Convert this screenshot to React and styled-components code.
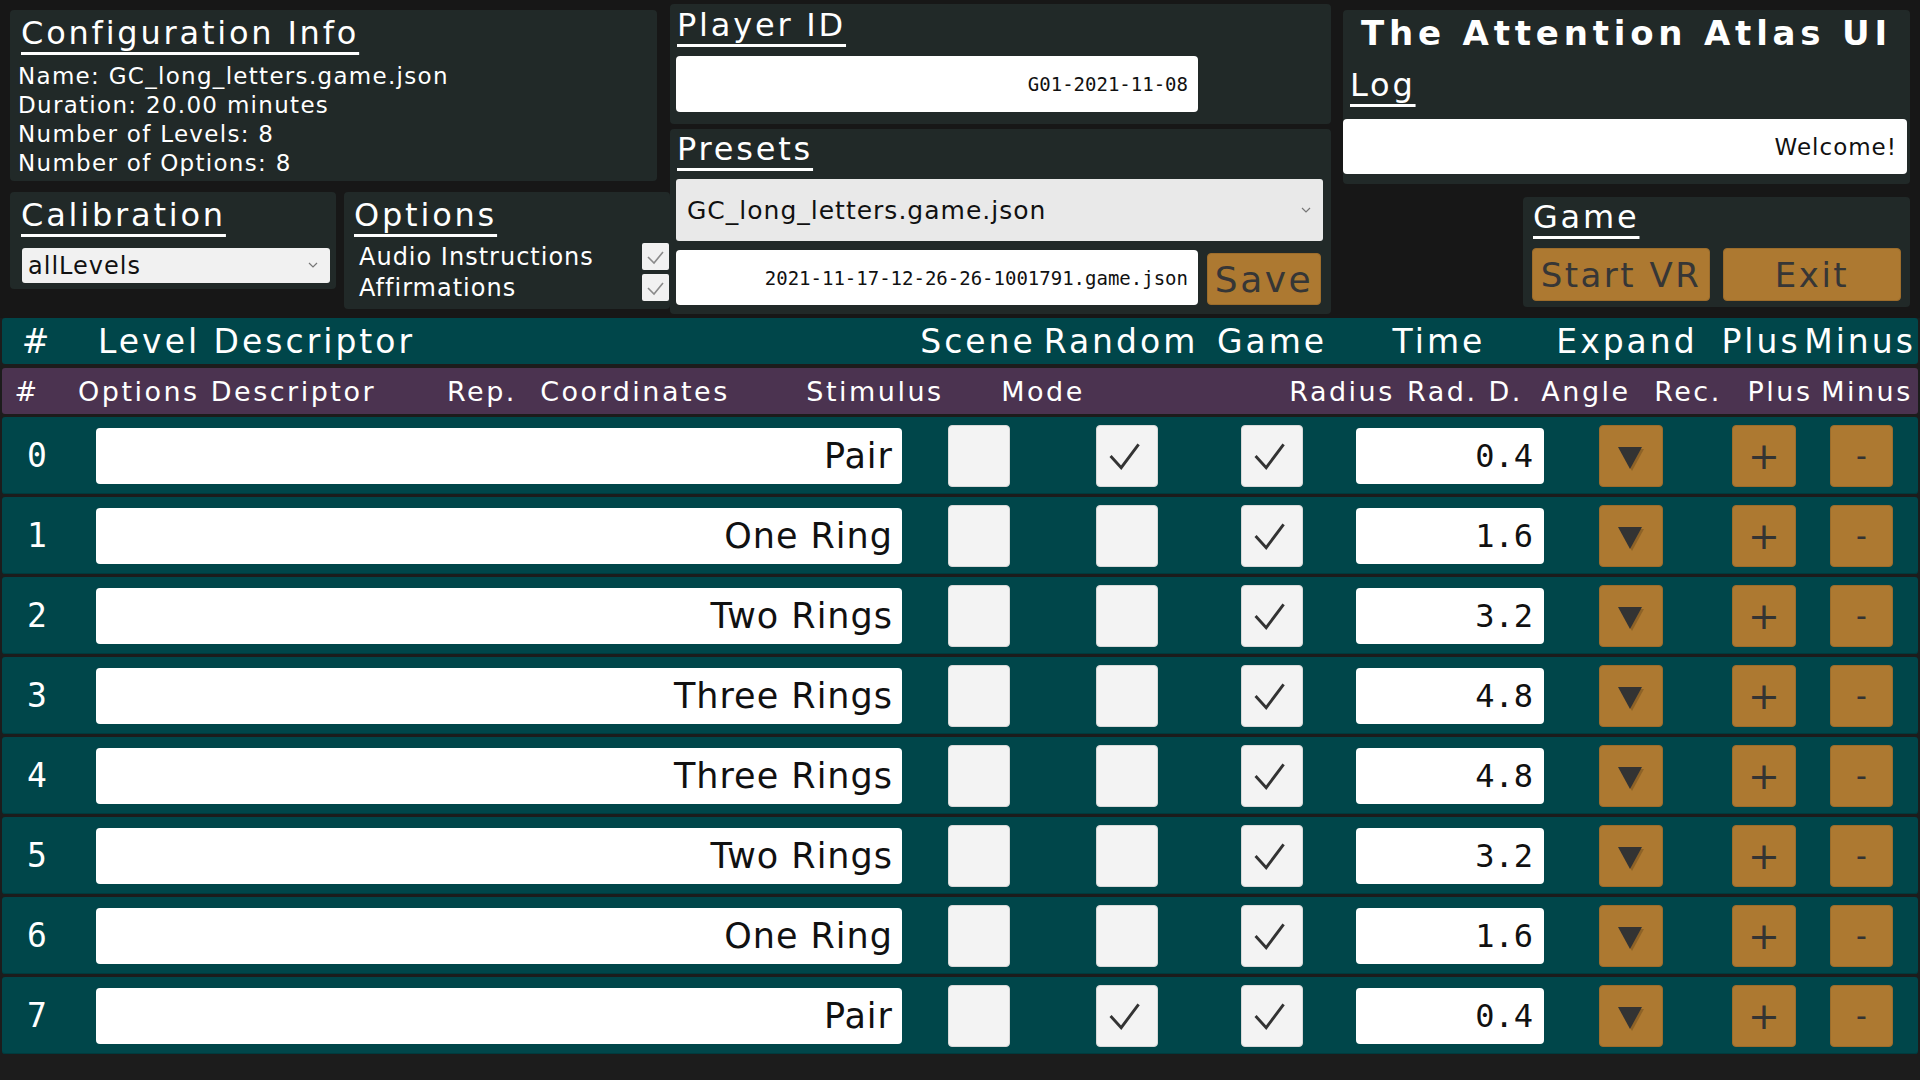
import React from "react";
import styled, { createGlobalStyle } from "styled-components";

const GlobalStyle = createGlobalStyle`
  html, body {
    margin: 0;
    padding: 0;
    background: #171717;
  }
  body {
    font-family: "DejaVu Sans", "Liberation Sans", sans-serif;
    color: #ffffff;
  }
`;

const Page = styled.div`
  width: 1920px;
  height: 1080px;
  overflow: hidden;
  background: #171717;
  display: flex;
  flex-direction: column;
`;

// top area
const Top = styled.div`
  display: flex;
  align-items: flex-start;
  height: 318px;
  flex-shrink: 0;
`;

const Column = styled.div`
  display: flex;
  flex-direction: column;
  width: ${(p) => p.$w}px;
  margin-left: ${(p) => p.$ml || 0}px;
  padding-top: ${(p) => p.$pt || 0}px;
`;

const Panel = styled.div`
  box-sizing: border-box;
  display: flex;
  flex-direction: column;
  background: #212928;
  border-radius: 4px;
  width: ${(p) => p.$w}px;
  height: ${(p) => p.$h}px;
  margin-top: ${(p) => p.$mt || 0}px;
  padding-top: ${(p) => p.$pt || 0}px;
  padding-left: ${(p) => p.$pl || 0}px;
  align-self: ${(p) => (p.$end ? "flex-end" : "flex-start")};
`;

const PanelRow = styled.div`
  display: flex;
  align-items: flex-start;
  gap: 8px;
  margin-top: 11px;
`;

const SectionTitle = styled.div`
  align-self: flex-start;
  font-size: 32px;
  line-height: 40px;
  letter-spacing: 2.8px;
  margin-left: ${(p) => p.$ml || 0}px;
  margin-top: ${(p) => p.$mt || 0}px;
  text-decoration: underline;
  text-decoration-thickness: 3px;
  text-underline-offset: 8px;
  text-decoration-skip-ink: none;
`;

const InfoText = styled.div`
  margin-top: 9px;
  font-size: 23px;
  line-height: 29px;
  letter-spacing: 1.3px;
`;

const SelectBox = styled.div`
  box-sizing: border-box;
  display: flex;
  align-items: center;
  justify-content: space-between;
  width: ${(p) => p.$w}px;
  height: ${(p) => p.$h}px;
  margin-top: ${(p) => p.$mt}px;
  padding: 0 12px 0 ${(p) => p.$pl}px;
  background: ${(p) => p.$bg};
  border-radius: 3px;
  color: #111;
  font-size: ${(p) => p.$fs}px;
  letter-spacing: 1px;
  white-space: nowrap;
`;

const Chevron = styled.svg`
  width: 10px;
  height: 7px;
  flex-shrink: 0;
`;

const OptionList = styled.div`
  display: flex;
  flex-direction: column;
  gap: 4px;
  margin-top: 8px;
  padding-right: 1px;
`;

const OptionRow = styled.div`
  display: flex;
  align-items: center;
  justify-content: space-between;
  height: 27px;
  padding-left: 5px;
  font-size: 24px;
  letter-spacing: 1px;
`;

const SmallCheck = styled.div`
  box-sizing: border-box;
  width: 27px;
  height: 27px;
  background: #f1f1f1;
  border-radius: 2px;
  display: flex;
  align-items: center;
  justify-content: center;
`;

const TextField = styled.div`
  box-sizing: border-box;
  display: flex;
  align-items: center;
  justify-content: flex-end;
  width: ${(p) => p.$w}px;
  height: ${(p) => p.$h}px;
  margin-top: ${(p) => p.$mt || 0}px;
  padding-right: ${(p) => p.$pr || 10}px;
  background: #ffffff;
  border-radius: 4px;
  color: #111;
  font-family: ${(p) => (p.$mono ? '"DejaVu Sans Mono", monospace' : '"DejaVu Sans", sans-serif')};
  font-size: ${(p) => p.$fs}px;
  letter-spacing: ${(p) => p.$ls || 0}px;
  white-space: nowrap;
`;

const FileRow = styled.div`
  display: flex;
  align-items: flex-end;
  margin-top: 9px;
`;

const OrangeButton = styled.div`
  box-sizing: border-box;
  display: flex;
  align-items: center;
  justify-content: center;
  width: ${(p) => p.$w}px;
  height: ${(p) => p.$h}px;
  margin-left: ${(p) => p.$ml || 0}px;
  background: #ad7931;
  border: 1px solid #9c6c2b;
  border-radius: 4px;
  color: #363636;
  font-size: ${(p) => p.$fs || 34}px;
  letter-spacing: ${(p) => p.$ls ?? 2.5}px;
  white-space: nowrap;
`;

const AppTitle = styled.div`
  font-size: 34px;
  font-weight: bold;
  line-height: 46px;
  letter-spacing: 4.8px;
  text-align: center;
`;

const ButtonRow = styled.div`
  display: flex;
  margin-top: 11px;
  margin-left: -1px;
`;

// table
const Table = styled.div`
  display: flex;
  flex-direction: column;
  gap: 3px;
  padding: 0 2px;
  background: #1c1c1c;
  flex: 1;
`;

const HeaderRow = styled.div`
  display: flex;
  align-items: center;
  height: 46px;
  margin-bottom: ${(p) => p.$mb || 0}px;
  background: ${(p) => p.$bg};
  border-radius: 3px;
  font-size: ${(p) => p.$fs}px;
  letter-spacing: ${(p) => p.$ls}px;
  white-space: nowrap;
`;

const HeadCell = styled.div`
  display: flex;
  justify-content: ${(p) => (p.$left ? "flex-start" : "center")};
  width: ${(p) => p.$w}px;
  margin-left: ${(p) => p.$ml}px;
  flex-shrink: 0;
`;

const Row = styled.div`
  display: flex;
  align-items: center;
  height: 77px;
  background: #00464a;
  border-radius: 3px;
  box-shadow: inset 0 -1px 0 #003a3d;
`;

const NumCell = styled.div`
  width: 70px;
  text-align: center;
  font-family: "DejaVu Sans Mono", monospace;
  font-size: 33px;
  flex-shrink: 0;
`;

const BigCheck = styled.div`
  box-sizing: border-box;
  width: 62px;
  height: 62px;
  margin-left: ${(p) => p.$ml}px;
  background: #f3f3f3;
  border: 1px solid #d8d8d8;
  border-radius: 4px;
  display: flex;
  align-items: center;
  justify-content: center;
  flex-shrink: 0;
`;

const RowField = styled(TextField)`
  margin-left: ${(p) => p.$ml}px;
  flex-shrink: 0;
`;

const RowButton = styled(OrangeButton)`
  flex-shrink: 0;
  color: #333;
`;

const Arrow = styled.svg`
  width: 26px;
  height: 24px;
  margin-top: 6px;
`;

const head1 = [
  ["#", 20, 30],
  ["Level Descriptor", 46, 330, true],
  ["Scene", 495, 110],
  ["Random", 13, 150],
  ["Game", 21, 110],
  ["Time", 62, 100],
  ["Expand", 68, 140],
  ["Plus", 26, 76],
  ["Minus", 11, 100],
];

const head2 = [
  ["#", 10, 30],
  ["Options Descriptor", 36, 300, true],
  ["Rep.", 64, 80],
  ["Coordinates", 13, 200],
  ["Stimulus", 65, 150],
  ["Mode", 48, 90],
  ["Radius", 199, 110],
  ["Rad. D.", 8, 120],
  ["Angle", 11, 100],
  ["Rec.", 17, 70],
  ["Plus", 22, 70],
  ["Minus", 2, 100],
];

const levels = [
  { name: "Pair", scene: false, random: true, game: true, time: "0.4" },
  { name: "One Ring", scene: false, random: false, game: true, time: "1.6" },
  { name: "Two Rings", scene: false, random: false, game: true, time: "3.2" },
  { name: "Three Rings", scene: false, random: false, game: true, time: "4.8" },
  { name: "Three Rings", scene: false, random: false, game: true, time: "4.8" },
  { name: "Two Rings", scene: false, random: false, game: true, time: "3.2" },
  { name: "One Ring", scene: false, random: false, game: true, time: "1.6" },
  { name: "Pair", scene: false, random: true, game: true, time: "0.4" },
];

function Tick({ size = 62 }) {
  if (size < 40) {
    return (
      <svg width="27" height="27" viewBox="0 0 27 27">
        <polyline points="6,14 12,20 21,9" fill="none" stroke="#8a8a8a" strokeWidth="1.6" />
      </svg>
    );
  }
  return (
    <svg width="62" height="62" viewBox="0 0 62 62">
      <polyline points="14,31 25,43 43,19" fill="none" stroke="#333" strokeWidth="3" strokeLinejoin="miter" />
    </svg>
  );
}

function Caret() {
  return (
    <Chevron viewBox="0 0 10 7">
      <polyline points="1,1 5,5 9,1" fill="none" stroke="#777" strokeWidth="1.2" />
    </Chevron>
  );
}

function LevelRow({ index, level }) {
  return (
    <Row>
      <NumCell>{index}</NumCell>
      <RowField $ml={24} $w={806} $h={56} $fs={35} $ls={1} $pr={9}>
        {level.name}
      </RowField>
      <BigCheck $ml={46}>{level.scene && <Tick />}</BigCheck>
      <BigCheck $ml={86}>{level.random && <Tick />}</BigCheck>
      <BigCheck $ml={83}>{level.game && <Tick />}</BigCheck>
      <RowField $ml={53} $w={188} $h={56} $fs={32} $pr={11} $mono>
        {level.time}
      </RowField>
      <RowButton $ml={55} $w={64} $h={62}>
        <Arrow viewBox="0 0 26 24">
          <polygon points="2,2 26,2 14,24" fill="#7a5522" opacity="0.6" />
          <polygon points="0,0 24,0 12,22" fill="#333" />
        </Arrow>
      </RowButton>
      <RowButton $ml={69} $w={64} $h={62} $fs={38} $ls={0}>
        +
      </RowButton>
      <RowButton $ml={34} $w={63} $h={62} $fs={30} $ls={0}>
        -
      </RowButton>
    </Row>
  );
}

export default function App() {
  return (
    <Page>
      <GlobalStyle />
      <Top>
        <Column $w={660} $ml={10} $pt={10}>
          <Panel $w={647} $h={171} $pt={3} $pl={8}>
            <SectionTitle $ml={3}>Configuration Info</SectionTitle>
            <InfoText>
              Name: GC_long_letters.game.json
              <br />
              Duration: 20.00 minutes
              <br />
              Number of Levels: 8
              <br />
              Number of Options: 8
            </InfoText>
          </Panel>
          <PanelRow>
            <Panel $w={326} $h={97} $pt={3} $pl={12}>
              <SectionTitle $ml={-1}>Calibration</SectionTitle>
              <SelectBox $w={308} $h={35} $mt={13} $pl={6} $bg="#f1f1f1" $fs={24}>
                allLevels
                <Caret />
              </SelectBox>
            </Panel>
            <Panel $w={326} $h={117} $pt={3} $pl={10}>
              <SectionTitle>Options</SectionTitle>
              <OptionList>
                <OptionRow>
                  Audio Instructions
                  <SmallCheck>
                    <Tick size={27} />
                  </SmallCheck>
                </OptionRow>
                <OptionRow>
                  Affirmations
                  <SmallCheck>
                    <Tick size={27} />
                  </SmallCheck>
                </OptionRow>
              </OptionList>
            </Panel>
          </PanelRow>
        </Column>

        <Column $w={661} $pt={4}>
          <Panel $w={661} $h={120} $pt={1} $pl={6}>
            <SectionTitle $ml={1}>Player ID</SectionTitle>
            <TextField $w={522} $h={56} $mt={11} $fs={19} $mono>
              G01-2021-11-08
            </TextField>
          </Panel>
          <Panel $w={661} $h={185} $mt={5} $pl={6}>
            <SectionTitle $ml={1}>Presets</SectionTitle>
            <SelectBox $w={647} $h={62} $mt={10} $pl={11} $bg="#e9e9e9" $fs={25}>
              GC_long_letters.game.json
              <Caret />
            </SelectBox>
            <FileRow>
              <TextField $w={522} $h={55} $fs={19} $mono>
                2021-11-17-12-26-26-1001791.game.json
              </TextField>
              <OrangeButton $w={114} $h={52} $ml={9} $fs={36}>
                Save
              </OrangeButton>
            </FileRow>
          </Panel>
        </Column>

        <Column $w={567} $ml={12} $pt={10}>
          <Panel $w={567} $h={174}>
            <AppTitle>The Attention Atlas UI</AppTitle>
            <SectionTitle $ml={7} $mt={9}>
              Log
            </SectionTitle>
            <TextField $w={564} $h={55} $mt={14} $fs={23} $ls={1}>
              Welcome!
            </TextField>
          </Panel>
          <Panel $w={387} $h={110} $mt={13} $pl={10} $end>
            <SectionTitle>Game</SectionTitle>
            <ButtonRow>
              <OrangeButton $w={178} $h={53}>
                Start VR
              </OrangeButton>
              <OrangeButton $w={178} $h={53} $ml={13}>
                Exit
              </OrangeButton>
            </ButtonRow>
          </Panel>
        </Column>
      </Top>

      <Table>
        <HeaderRow $bg="#00464a" $fs={33} $ls={3} $mb={1}>
          {head1.map(([label, ml, w, left]) => (
            <HeadCell key={label} $ml={ml} $w={w} $left={left}>
              {label}
            </HeadCell>
          ))}
        </HeaderRow>
        <HeaderRow $bg="#4b3350" $fs={27} $ls={2.5}>
          {head2.map(([label, ml, w, left], i) => (
            <HeadCell key={i} $ml={ml} $w={w} $left={left}>
              {label}
            </HeadCell>
          ))}
        </HeaderRow>
        {levels.map((level, i) => (
          <LevelRow key={i} index={i} level={level} />
        ))}
      </Table>
    </Page>
  );
}
